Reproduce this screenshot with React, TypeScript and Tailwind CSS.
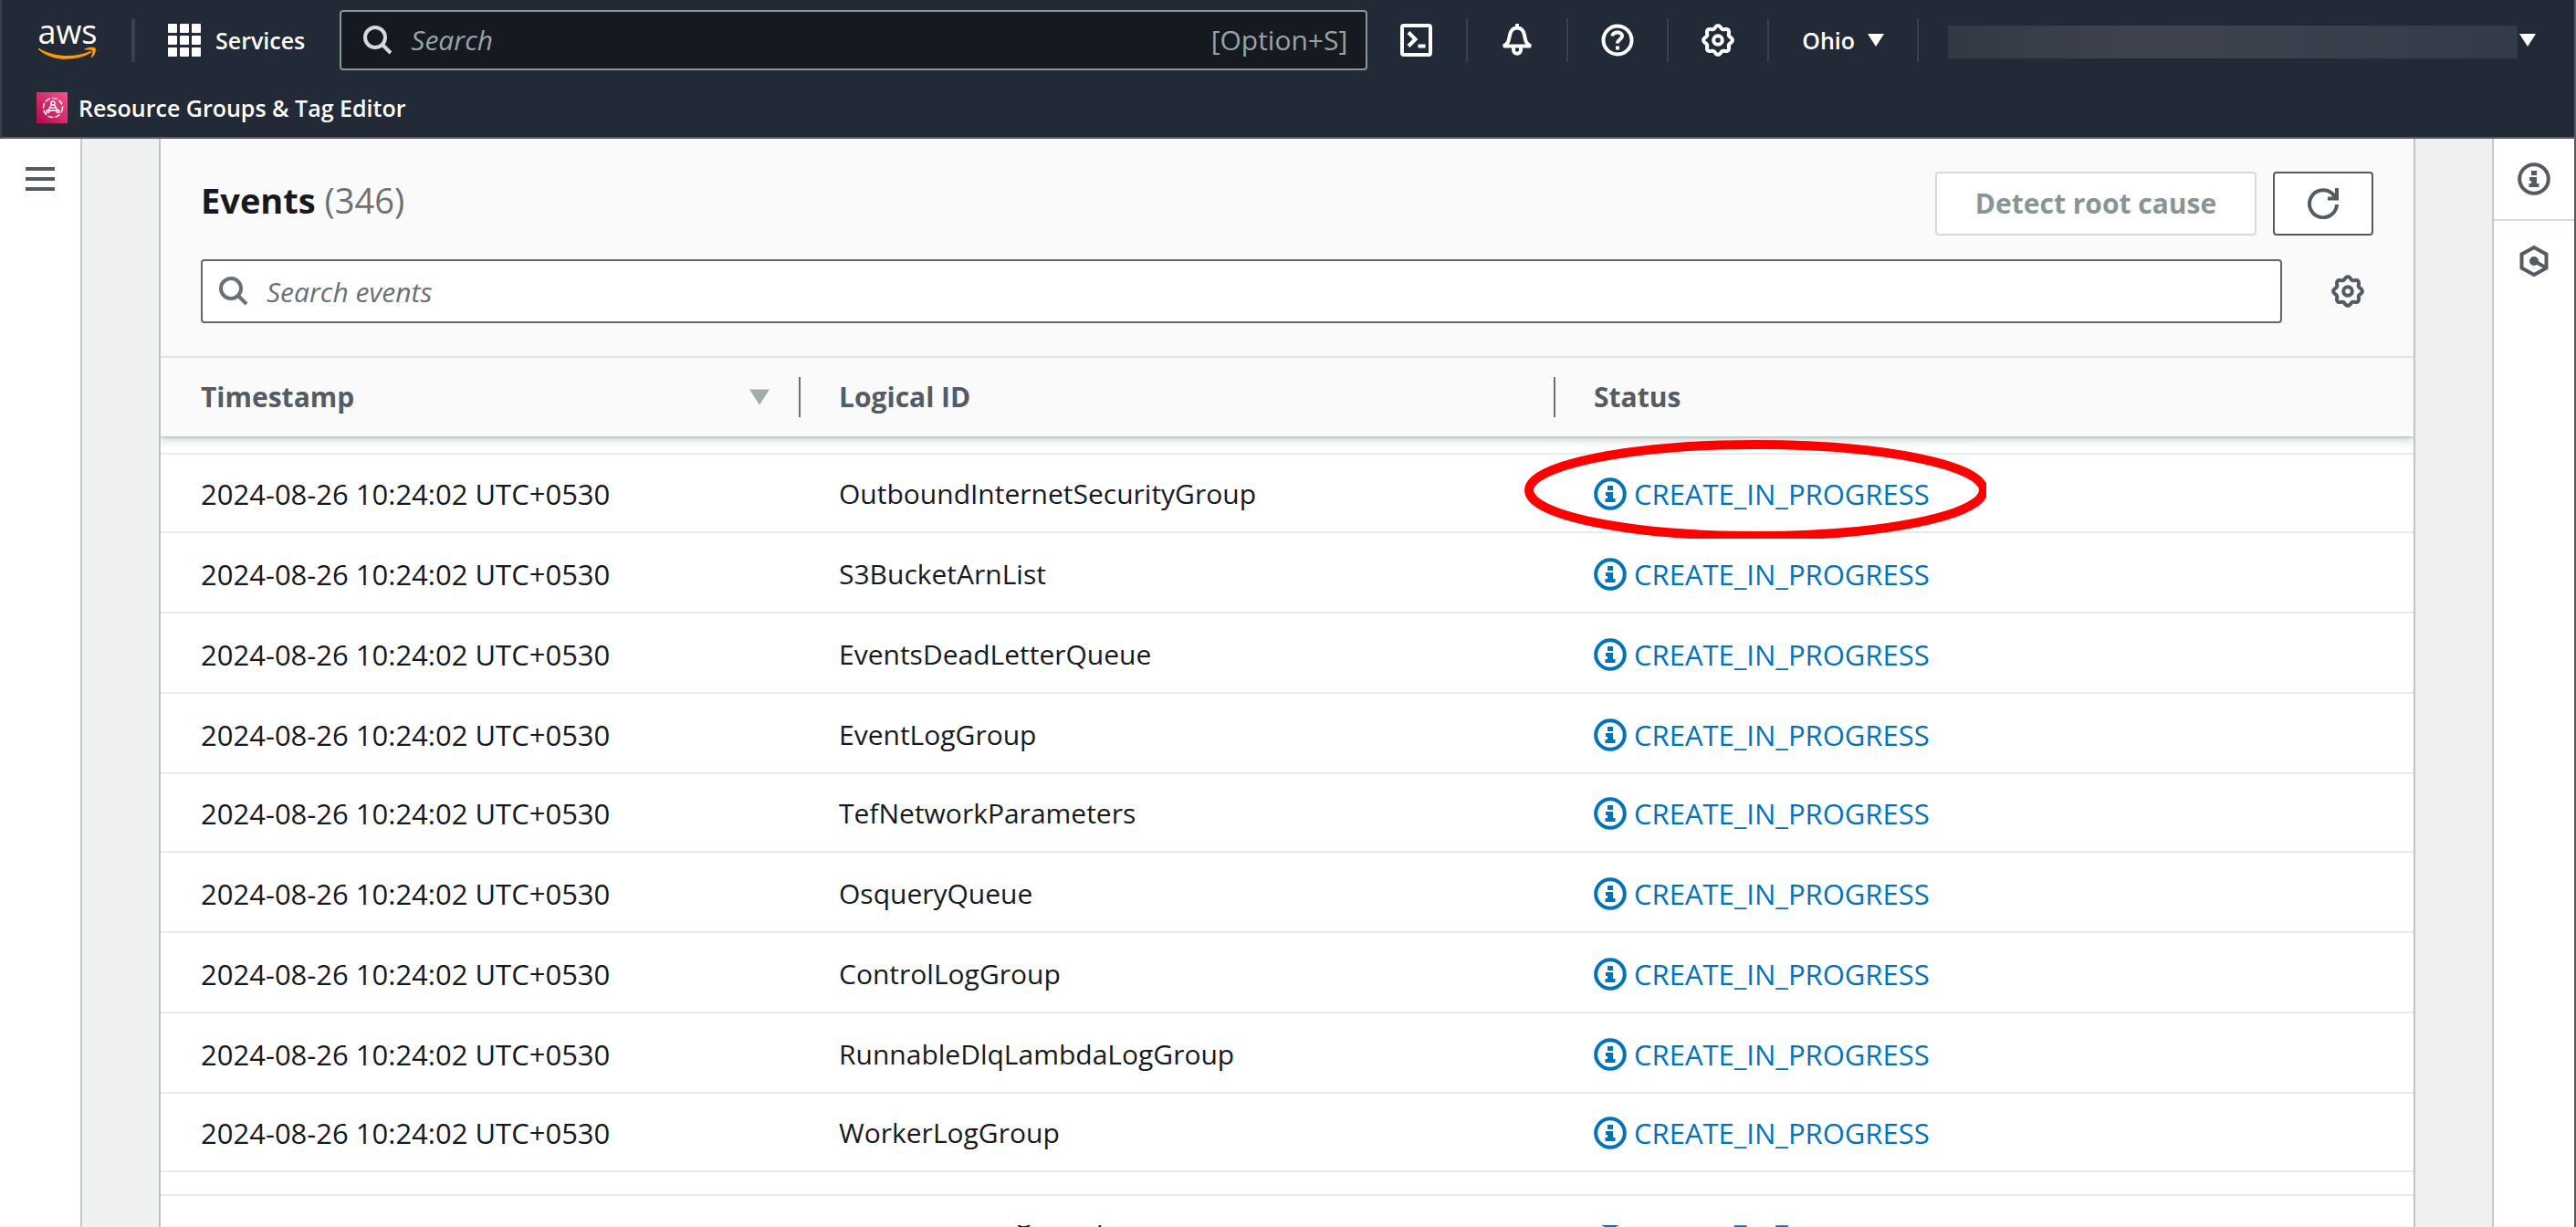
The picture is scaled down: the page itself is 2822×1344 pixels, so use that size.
import React from 'react';

const NAMES = [
  'OutboundInternetSecurityGroup',
  'S3BucketArnList',
  'EventsDeadLetterQueue',
  'EventLogGroup',
  'TefNetworkParameters',
  'OsqueryQueue',
  'ControlLogGroup',
  'RunnableDlqLambdaLogGroup',
  'WorkerLogGroup',
];
const TIME = '2024-08-26 10:24:02 UTC+0530';

type IconProps = { className?: string };

const InfoIcon = ({ className }: IconProps) => (
  <svg viewBox="0 0 36 36" className={className} fill="currentColor" aria-hidden="true">
    <circle cx="18" cy="18" r="15.8" fill="none" stroke="currentColor" strokeWidth="4" />
    <path d="M15 9h6v5h-6zM13 16h8v7h2.500v4H12.500v-4H15v-3h-2z" />
  </svg>
);

const SearchIcon = ({ className }: IconProps) => (
  <svg viewBox="0 0 32 32" className={className} fill="none" stroke="currentColor" strokeWidth="4" aria-hidden="true">
    <circle cx="13" cy="13" r="11" />
    <path d="M21 21l9 9" />
  </svg>
);

// Eight-lobed outline of the settings wheel, sampled every five degrees.
const GEAR_OUTLINE = Array.from({ length: 72 }, (_, i) => {
  const angle = (i * Math.PI) / 36;
  const radius = 14.4 + 1.5 * Math.cos(8 * angle);
  return `${(18 + radius * Math.cos(angle)).toFixed(2)},${(18 + radius * Math.sin(angle)).toFixed(2)}`;
}).join(' ');

const GearIcon = ({ className }: IconProps) => (
  <svg viewBox="0 0 36 36" className={className} fill="none" stroke="currentColor" strokeWidth="4" strokeLinejoin="round" aria-hidden="true">
    <polygon points={GEAR_OUTLINE} />
    <circle cx="18" cy="18" r="4.8" />
  </svg>
);

const Caret = ({ className }: IconProps) => (
  <svg viewBox="0 0 18 14" className={className} fill="currentColor" aria-hidden="true">
    <path d="M0 0h18l-9 14z" />
  </svg>
);

const AwsLogo = () => (
  <a href="#home" aria-label="AWS home" className="flex h-12 w-[72px] flex-col items-center text-white">
    <span className="text-[36px] leading-[30px] font-medium">aws</span>
    <svg viewBox="0 0 72 20" className="h-5 w-[72px]" fill="#ff9900" aria-hidden="true">
      <path d="M1 3c18 11 44 12 62 4 2-1 3 1 1 2C46 20 16 19 1 5c-1-1-1-2 0-2z" />
      <path d="M57 4c5-3 12-2 13-1s0 8-4 11c-1 1-2 0-1-1 1-3 2-6 1-7s-5-1-8-1-2 0-1-1z" />
    </svg>
  </a>
);

const Separator = () => <span className="h-12 w-0.5 bg-[#3b414b]" />;

const StatusCell = ({ marked }: { marked?: boolean }) => (
  <td className="relative p-0 pb-[21px] pl-[42px] align-bottom">
    <span className="flex items-center gap-2 text-[31px] text-[#0073bb]">
      <InfoIcon className="size-9" />
      CREATE_IN_PROGRESS
    </span>
    {marked && (
      <svg className="absolute -top-4 -left-[34px] z-10 h-[108px] w-[506px]" viewBox="0 0 506 108" fill="none" aria-hidden="true">
        <ellipse cx="254" cy="55" rx="249" ry="50" stroke="#ff0000" strokeWidth="10" />
      </svg>
    )}
  </td>
);

export default function App() {
  return (
    <div className="flex h-screen flex-col overflow-hidden border-r-2 border-[#545b64] bg-white font-['Open_Sans','Noto_Sans',sans-serif] text-[30px] leading-10 text-[#16191f]">
      <header className="h-[152px] shrink-0 border-b-2 border-l-2 border-b-[#545b64] border-l-[#3b414b] bg-[#212a36] text-white">
        <div className="flex h-[88px] items-center pl-9">
          <AwsLogo />
          <span className="ml-[34px] h-12 w-1 bg-[#3b414b]" />
          <button className="ml-9 flex items-center gap-4 text-[25px] font-semibold">
            <svg viewBox="0 0 36 36" className="size-9" fill="currentColor" aria-hidden="true">
              {[0, 13, 26].map((y) => [0, 13, 26].map((x) => <rect key={`${x}-${y}`} x={x} y={y} width="10" height="10" rx="1" />))}
            </svg>
            Services
          </button>
          <label className="ml-[38px] flex h-[66px] w-[1126px] shrink-0 items-center rounded-sm border-2 border-[#879596] bg-[#16191f] pr-5 pl-6 text-[#95a5a6]">
            <SearchIcon className="size-8 shrink-0 text-[#d5dbdb]" />
            <input aria-label="Search" placeholder="Search" className="ml-5 min-w-0 flex-1 bg-transparent italic outline-none placeholder:text-[#95a5a6]" />
            <span>[Option+S]</span>
          </label>
          <nav className="flex flex-1 items-center">
            <button aria-label="CloudShell" className="mr-9 ml-9">
              <svg viewBox="0 0 36 36" className="size-9" fill="none" stroke="currentColor" strokeWidth="4" aria-hidden="true">
                <rect x="2" y="2" width="31" height="32" rx="2" />
                <path d="M9 9.500l7.500 7.500-7.500 7.500M19.500 24.500h8" />
              </svg>
            </button>
            <Separator />
            <button aria-label="Notifications" className="mx-9">
              <svg viewBox="0 0 36 36" className="size-9" fill="none" stroke="currentColor" strokeWidth="4" aria-hidden="true">
                <path d="M3 24.500c6-3 6-7 7-12 1-5 4-8 8-8s7 3 8 8c1 5 1 9 7 12zM18 0v5M14 26v3c0 5 8 5 8 0v-3" />
              </svg>
            </button>
            <Separator />
            <button aria-label="Help" className="mx-9">
              <svg viewBox="0 0 36 36" className="size-9" fill="none" stroke="currentColor" strokeWidth="4" aria-hidden="true">
                <circle cx="18" cy="18" r="15.5" />
                <path d="M12.500 13.500c0-5.500 10.500-5.500 10.500 0 0 4-5 3.500-5 8M18 24.500v4" />
              </svg>
            </button>
            <Separator />
            <button aria-label="Settings" className="mx-9">
              <GearIcon className="size-9" />
            </button>
            <Separator />
            <button className="mx-9 flex items-center gap-3.5 text-[25px] font-semibold">
              Ohio
              <Caret className="h-3.5 w-[18px]" />
            </button>
            <Separator />
            <button aria-label="Account" className="mr-[42px] ml-8 flex flex-1 items-center gap-0.5">
              <span className="mt-1 h-9 flex-1 bg-linear-to-r from-[#323945] via-[#3e434f] via-35% to-[#343b48]" />
              <Caret className="h-3.5 w-[18px]" />
            </button>
          </nav>
        </div>
        <a href="#resource-groups" className="ml-[38px] flex w-fit items-center gap-3 pt-2.5 text-[25px] font-semibold">
          <svg viewBox="0 0 34 34" className="size-[34px]" fill="none" stroke="#ffffff" strokeWidth="2" aria-hidden="true">
            <defs>
              <linearGradient id="tag-editor" x1="0" y1="1" x2="1" y2="0">
                <stop stopColor="#b0084d" />
                <stop offset="1" stopColor="#ff4f8b" />
              </linearGradient>
            </defs>
            <rect width="34" height="34" fill="url(#tag-editor)" stroke="none" />
            <circle cx="18" cy="17" r="10.500" strokeWidth="1.500" strokeDasharray="6 2" />
            <circle cx="18" cy="12" r="2" strokeWidth="1.500" />
            <path d="M12.500 20.500l4-7M23.500 20.500l-4-7M14 20h8M15 17h6" strokeWidth="1.500" />
            <circle cx="12.500" cy="21" r="1.500" strokeWidth="1.500" />
            <circle cx="23.500" cy="21" r="1.500" strokeWidth="1.500" />
          </svg>
          Resource Groups &amp; Tag Editor
        </a>
      </header>

      <div className="flex min-h-0 flex-1">
        <aside className="w-[90px] shrink-0 border-r-2 border-[#c4c9ca] pt-7 pl-7">
          <button aria-label="Open navigation" className="block">
            <svg viewBox="0 0 32 32" className="size-8" stroke="#545b64" strokeWidth="4" aria-hidden="true">
              <path d="M0 5h32M0 16h32M0 27h32" />
            </svg>
          </button>
        </aside>

        <main className="min-w-0 flex-1 bg-[#eff1f1] px-[84px]">
          <section className="h-full overflow-hidden border-x-2 border-[#bcc3c6] bg-white">
            <div className="bg-[#fafafa] px-11 pt-9 pb-9">
              <div className="flex items-start">
                <h2 className="flex-1 pt-1.5 text-[38px] leading-[50px] font-bold">
                  Events <span className="font-normal text-[#687078]">(346)</span>
                </h2>
                <button className="h-[70px] w-[352px] rounded-sm border-2 border-[#d5dbdb] bg-white font-bold text-[#879596]">Detect root cause</button>
                <button aria-label="Refresh" className="ml-[18px] flex h-[70px] w-[110px] items-center justify-center rounded-sm border-2 border-[#545b64] bg-white text-[#545b64]">
                  <svg viewBox="0 0 34 34" className="size-[34px]" fill="none" stroke="currentColor" strokeWidth="4" aria-hidden="true">
                    <path d="M32 18a15 15 0 1 1-5-12l4 5" />
                    <path d="M32 0v11.500H22" />
                  </svg>
                </button>
              </div>
              <div className="mt-[26px] flex items-center">
                <label className="flex h-[70px] flex-1 items-center rounded-sm border-2 border-[#5f6870] bg-white pl-[18px]">
                  <SearchIcon className="size-8 text-[#687078]" />
                  <input aria-label="Search events" placeholder="Search events" className="ml-5 min-w-0 flex-1 bg-transparent pt-0.5 italic outline-none placeholder:text-[#687078]" />
                </label>
                <button aria-label="Preferences" className="mr-2.5 ml-[54px] text-[#545b64]">
                  <GearIcon className="size-9" />
                </button>
              </div>
            </div>

            <table className="w-full table-fixed border-collapse text-left">
              <colgroup>
                <col className="w-[701px]" />
                <col className="w-[827px]" />
                <col />
              </colgroup>
              <thead className="relative bg-[#fafafa] text-[#545b64] shadow-[0_4px_8px_rgba(0,28,36,0.18)]">
                <tr className="h-[88px] border-y-2 border-[#e7ebeb]">
                  <th className="p-0 pl-11">
                    <span className="flex h-11 items-center justify-between border-r-2 border-[#687078] pr-8">
                      Timestamp
                      <Caret className="h-[18px] w-[22px] text-[#9fadad]" />
                    </span>
                  </th>
                  <th className="p-0 pl-[42px]">
                    <span className="flex h-11 items-center border-r-2 border-[#687078]">Logical ID</span>
                  </th>
                  <th className="p-0 pl-[42px]">Status</th>
                </tr>
              </thead>
              <tbody>
                <tr className="h-[18px] border-b-2 border-[#e7ebeb]">
                  <td colSpan={3} />
                </tr>
                {NAMES.map((name, i) => (
                  <tr key={name} className={i % 4 === 0 ? 'h-[86px] border-b-2 border-[#e7ebeb]' : 'h-[88px] border-b-2 border-[#e7ebeb]'}>
                    <td className="p-0 pb-[21px] pl-11 align-bottom text-[31px]">{TIME}</td>
                    <td className="p-0 pb-[21px] pl-[42px] align-bottom">{name}</td>
                    <StatusCell marked={i === 0} />
                  </tr>
                ))}
                <tr className="h-[26px] border-b-2 border-[#e7ebeb]">
                  <td colSpan={3} />
                </tr>
                {/* Row scrolled mostly out of view: only the lowest strokes remain visible. */}
                <tr className="align-top">
                  <td />
                  <td className="p-0 pt-8 pl-[42px]">
                    <div className="h-3 overflow-hidden">
                      <div className="-mt-[35px]">EnrichmentLogGroup</div>
                    </div>
                  </td>
                  <td className="p-0 pt-8 pl-[42px]">
                    <div className="h-3 overflow-hidden">
                      <div className="-mt-[35px] flex items-center gap-2 text-[31px] text-[#0073bb]">
                        <InfoIcon className="size-9" />
                        CREATE_IN_PROGRESS
                      </div>
                    </div>
                  </td>
                </tr>
              </tbody>
            </table>
          </section>
        </main>

        <aside className="flex w-[90px] shrink-0 flex-col border-l-2 border-[#c4c9ca] text-[#545b64]">
          <button aria-label="Info" className="flex h-[90px] items-center justify-center border-b-2 border-[#d5dbdb]">
            <InfoIcon className="size-9" />
          </button>
          <button aria-label="Diagnostics" className="flex h-[88px] items-center justify-center">
            <svg viewBox="0 0 36 36" className="size-9" fill="none" stroke="currentColor" strokeWidth="4" aria-hidden="true">
              <path d="M18 3l13.500 7.500v15L18 33 4.500 25.500v-15z" />
              <circle cx="18" cy="18" r="3" fill="currentColor" />
              <path d="M18 18l13 7" />
            </svg>
          </button>
        </aside>
      </div>
    </div>
  );
}
